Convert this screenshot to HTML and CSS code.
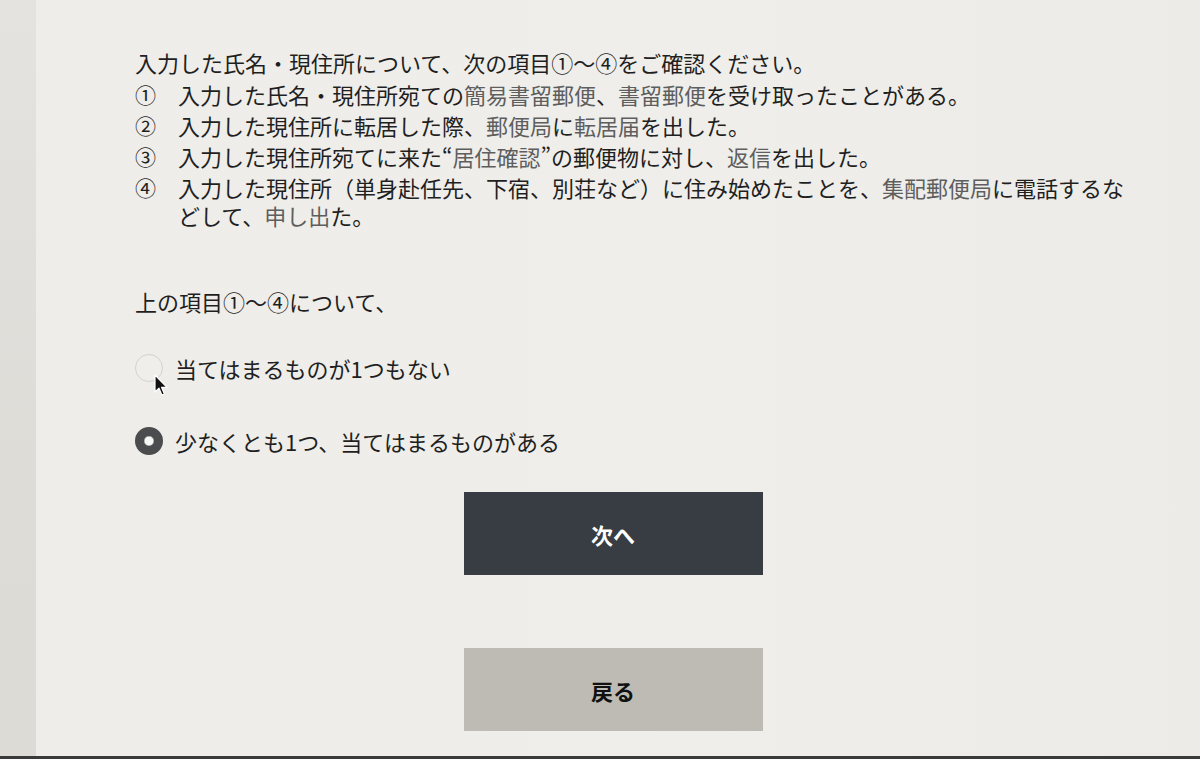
FILE: index.html
```html
<!DOCTYPE html>
<html lang="ja">
<head>
<meta charset="utf-8">
<title>確認</title>
<link rel="stylesheet" href="styles.css">
</head>
<body>
<div class="screen">
  <div class="strip"></div>
  <main class="main">
    <p class="lead">入力した氏名・現住所について、次の項目①～④をご確認ください。</p>
    <ol class="items">
      <li><span class="num">①</span><span class="txt">入力した氏名・現住所宛ての<span class="hl">簡易書留郵便</span>、<span class="hl">書留郵便</span>を受け取ったことがある。</span></li>
      <li><span class="num">②</span><span class="txt">入力した現住所に転居した際、<span class="hl">郵便局</span>に<span class="hl">転居届</span>を出した。</span></li>
      <li><span class="num">③</span><span class="txt">入力した現住所宛てに来た“<span class="hl">居住確認</span>”の郵便物に対し、<span class="hl">返信</span>を出した。</span></li>
      <li><span class="num">④</span><span class="txt">入力した現住所（単身赴任先、下宿、別荘など）に住み始めたことを、<span class="hl">集配郵便局</span>に電話するなどして、<span class="hl">申し出</span>た。</span></li>
    </ol>
    <p class="question">上の項目①～④について、</p>
    <div class="choices">
      <label class="choice">
        <input type="radio" name="ans" class="radio">
        <span>当てはまるものが1つもない</span>
        <svg class="cursor" width="14" height="23" viewBox="0 0 14 23"><path d="M1 1 L1 18 L5 14.2 L7.9 21 L10.4 20 L7.6 13.4 L13 13.4 Z" fill="#111" stroke="#fff" stroke-width="1.2" stroke-linejoin="round"/></svg>
      </label>
      <label class="choice">
        <input type="radio" name="ans" class="radio" checked>
        <span>少なくとも1つ、当てはまるものがある</span>
      </label>
    </div>
    <div class="buttons">
      <button class="btn btn-next" type="button">次へ</button>
      <button class="btn btn-back" type="button">戻る</button>
    </div>
  </main>
</div>
</body>
</html>
```

FILE: styles.css
```css
* { box-sizing: border-box; }

html, body {
  margin: 0;
  padding: 0;
  height: 759px;
  overflow: hidden;
}

body {
  font-family: "Noto Sans CJK JP", "Noto Sans", sans-serif;
  color: #1f1f1f;
  background: #ecebe7;
}

.screen {
  display: flex;
  height: 759px;
  border-bottom: 3px solid #3a3a3a;
}

.strip {
  width: 36px;
  flex: none;
  background: linear-gradient(180deg, #e4e3df 0%, #dddcd7 60%, #dcdbd6 100%);
}

.main {
  flex: 1;
  padding: 48px 0 0 99px;
  background: linear-gradient(90deg, #eeede9 0%, #efeeea 60%, #ecebe7 100%);
}

.lead {
  margin: 0;
  font-size: 22px;
  line-height: 28px;
}

.items {
  list-style: none;
  margin: 4px 0 0;
  padding: 0;
  width: 1000px;
}

.items li {
  display: grid;
  grid-template-columns: 43px 957px;
  font-size: 22px;
  line-height: 28px;
  margin-bottom: 3px;
}

.num {
  font-size: 21px;
}

.hl {
  color: #5e5e5e;
}

.question {
  margin: 58px 0 0;
  font-size: 22px;
  line-height: 28px;
}

.choices {
  display: flex;
  flex-direction: column;
  gap: 43px;
  margin-top: 38px;
}

.choice {
  position: relative;
  display: flex;
  align-items: center;
  gap: 12px;
  font-size: 22px;
  line-height: 30px;
}

.radio {
  appearance: none;
  -webkit-appearance: none;
  margin: 0;
  width: 28px;
  height: 28px;
  border-radius: 50%;
  border: 1.5px solid #d2d1cd;
  background: #efeeeb;
  flex: none;
}

.radio:checked {
  border: 9px solid #4a4c4e;
  background: #f6f6f4;
  box-shadow: inset 0 0 0 0.5px #888;
}

.cursor {
  position: absolute;
  left: 19px;
  top: 21px;
}

.buttons {
  display: flex;
  flex-direction: column;
  align-items: center;
  gap: 73px;
  margin-top: 36px;
  margin-left: -99px;
  padding-right: 10px;
}

.btn {
  width: 299px;
  height: 83px;
  border: none;
  font-family: "Noto Sans CJK JP", "Noto Sans", sans-serif;
  font-size: 22px;
  font-weight: 700;
  cursor: pointer;
}

.btn-next {
  background: #373d42;
  color: #ffffff;
}

.btn-back {
  background: #bdbbb3;
  color: #111;
}
```
